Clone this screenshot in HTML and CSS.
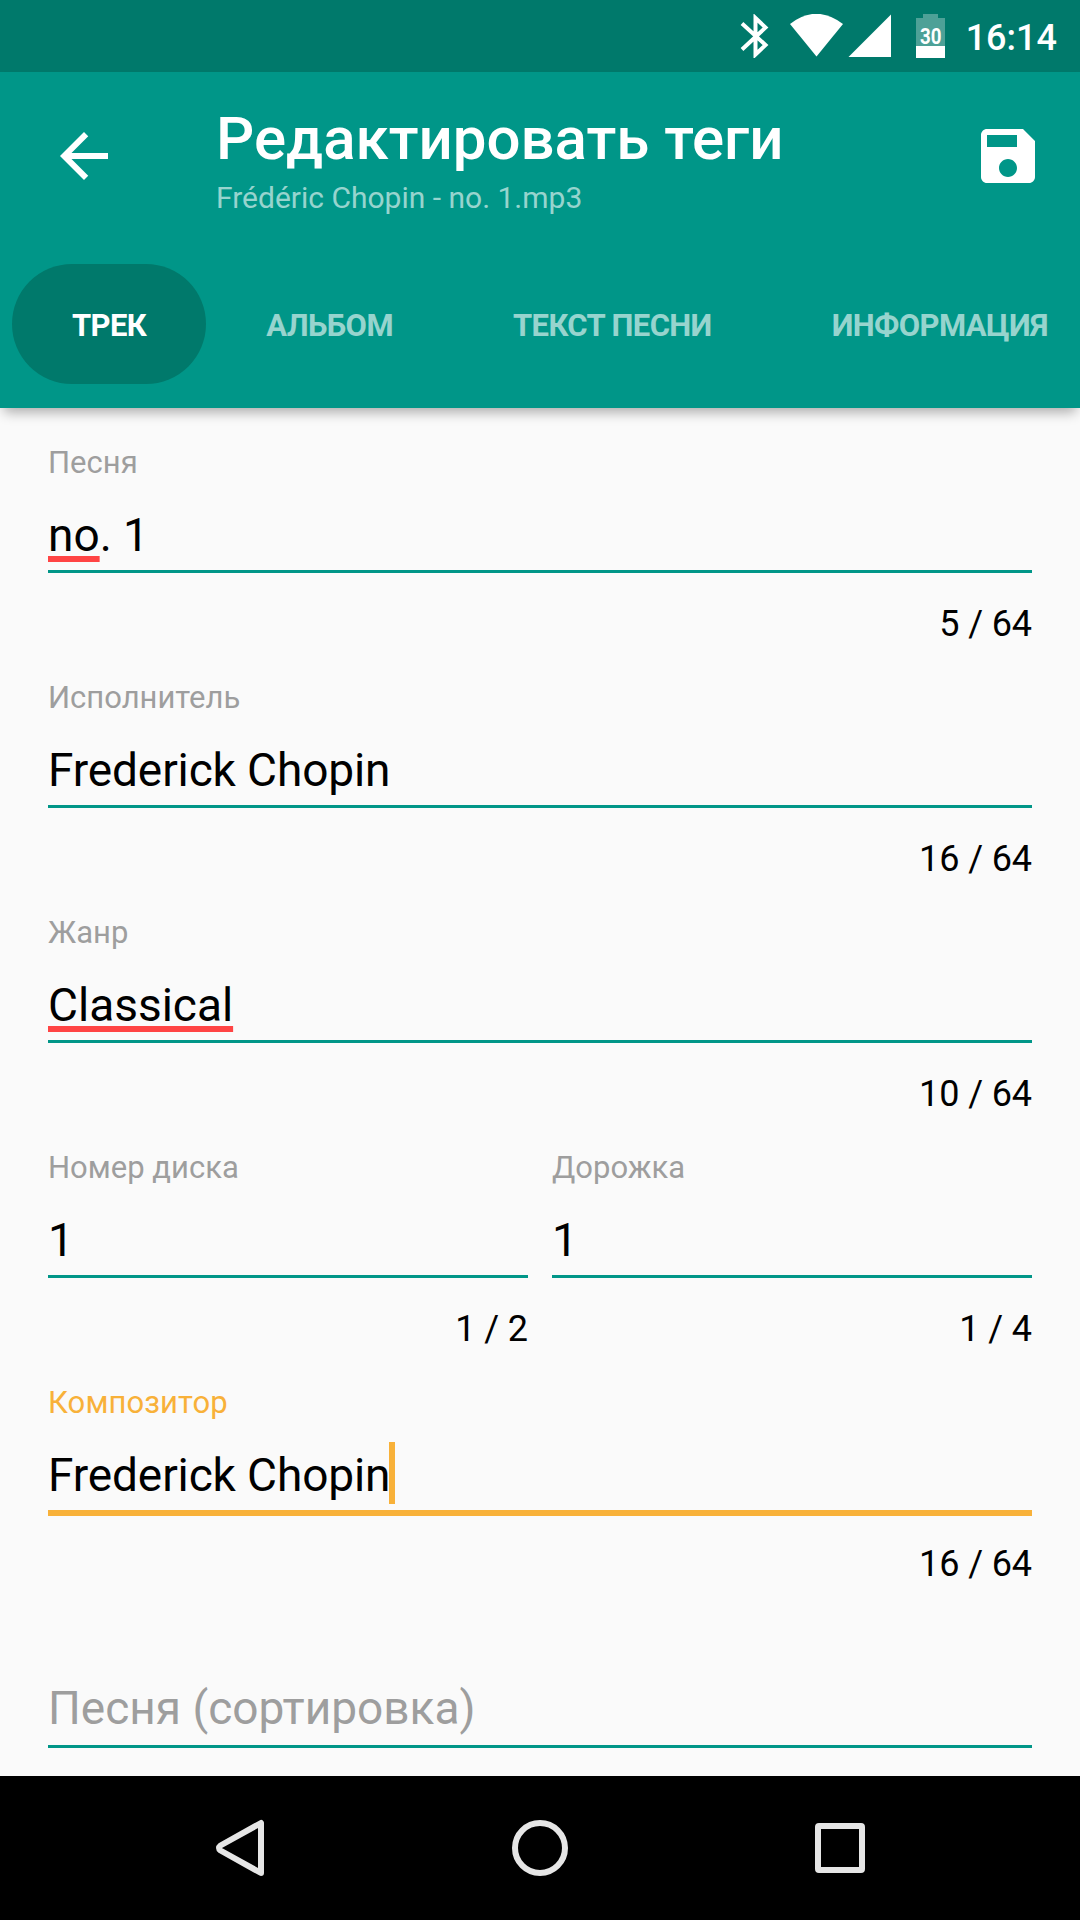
FILE: index.html
```html
<!DOCTYPE html>
<html lang="ru">
<head>
    <meta charset="UTF-8">
    <meta name="viewport" content="width=device-width, initial-scale=1.0">
    <title>Редактировать теги</title>
    <link rel="stylesheet" href="styles.css">
</head>
<body>
    <!-- Status bar -->
    <div class="status-bar">
        <svg class="status-icons" width="205" height="44" viewBox="0 0 205 44" fill="#fff">
            <path d="M2 9.500L25.500 31L15.500 40.500V4L25.500 13.500L2 35.500" fill="none" stroke="#fff" stroke-width="4"/>
            <path d="M50 10Q76 -10.500 103 10L76.500 42.500Z"/>
            <path d="M108.500 43H151V.5Z"/>
            <path d="M176 4h7V0h15v4h7v28h-29z" fill-opacity=".3"/>
            <path d="M176 32h29v12h-29z"/>
            <text x="180" y="30" class="battery-text" textLength="21.5" lengthAdjust="spacingAndGlyphs">30</text>
        </svg>
        <span class="clock">16:14</span>
    </div>

    <!-- App bar -->
    <header class="app-bar">
        <div class="toolbar">
            <svg class="icon" viewBox="0 0 24 24"><path d="M20 11H7.830l5.590-5.590L12 4l-8 8 8 8 1.410-1.410L7.830 13H20v-2z"/></svg>
            <div class="titles">
                <h1>Редактировать теги</h1>
                <p>Frédéric Chopin - no. 1.mp3</p>
            </div>
            <svg class="icon" viewBox="0 0 24 24"><path d="M17 3H5c-1.110 0-2 .9-2 2v14c0 1.100.890 2 2 2h14c1.100 0 2-.9 2-2V7l-4-4zm-5 16c-1.660 0-3-1.340-3-3s1.340-3 3-3 3 1.340 3 3-1.340 3-3 3zm3-10H5V5h10v4z"/></svg>
        </div>
        <nav class="tabs">
            <a class="tab active">ТРЕК</a>
            <a class="tab">АЛЬБОМ</a>
            <a class="tab">ТЕКСТ ПЕСНИ</a>
            <a class="tab">ИНФОРМАЦИЯ</a>
        </nav>
    </header>

    <!-- Tag fields -->
    <main class="content">
        <div class="field">
            <div class="label">Песня</div>
            <div class="value"><span class="spell">no</span>. 1</div>
            <div class="counter">5 / 64</div>
        </div>
        <div class="field">
            <div class="label">Исполнитель</div>
            <div class="value">Frederick Chopin</div>
            <div class="counter">16 / 64</div>
        </div>
        <div class="field">
            <div class="label">Жанр</div>
            <div class="value"><span class="spell">Classical</span></div>
            <div class="counter">10 / 64</div>
        </div>
        <div class="row">
            <div class="field">
                <div class="label">Номер диска</div>
                <div class="value">1</div>
                <div class="counter">1 / 2</div>
            </div>
            <div class="field">
                <div class="label">Дорожка</div>
                <div class="value">1</div>
                <div class="counter">1 / 4</div>
            </div>
        </div>
        <div class="field focused">
            <div class="label">Композитор</div>
            <div class="value"><span class="caret">Frederick Chopin</span></div>
            <div class="counter">16 / 64</div>
        </div>
        <div class="field empty">
            <div class="label"></div>
            <div class="value">Песня (сортировка)</div>
        </div>
    </main>

    <!-- Navigation bar -->
    <footer class="nav-bar">
        <svg width="60" height="60" viewBox="0 0 60 60"><path d="M51 5V55L10.500 32.500Q7.500 30 10.500 27.500Z"/></svg>
        <svg width="60" height="60" viewBox="0 0 60 60"><circle cx="30" cy="30" r="25"/></svg>
        <svg width="60" height="60" viewBox="0 0 60 60"><rect x="8" y="8" width="44" height="44" rx="1"/></svg>
    </footer>
</body>
</html>
```
FILE: styles.css
```css
* {
    box-sizing: border-box;
}
body {
    margin: 0;
    height: 1920px;
    display: flex;
    flex-direction: column;
    overflow: hidden;
    background: #fafafa;
    color: #000;
    font-family: Roboto, sans-serif;
}
.status-bar {
    height: 72px;
    flex-shrink: 0;
    display: flex;
    align-items: center;
    justify-content: flex-end;
    padding-right: 23px;
    background: #00796b;
    color: #fff;
}
.battery-text {
    font-size: 22.5px;
    font-weight: 700;
}
.clock {
    margin-left: 21px;
    font-size: 36px;
    font-weight: 500;
    line-height: 42px;
    padding-top: 3px;
}
.app-bar {
    height: 336px;
    flex-shrink: 0;
    background: #009688;
    color: #fff;
    box-shadow: 0 8px 12px -4px rgba(0, 0, 0, 0.33);
    position: relative;
}
.toolbar {
    height: 168px;
    display: flex;
    align-items: center;
    padding: 0 36px 0 48px;
}
.icon {
    width: 72px;
    height: 72px;
    fill: #fff;
}
.titles {
    flex: 1;
    padding: 8px 0 0 96px;
}
.titles h1 {
    margin: 0;
    font-size: 60px;
    font-weight: 500;
    line-height: 70px;
}
.titles p {
    margin: 0;
    font-size: 30px;
    line-height: 36px;
    padding-top: 6px;
    color: rgba(255, 255, 255, 0.6);
}
.tabs {
    display: flex;
    padding: 24px 0 24px 12px;
}
.tab {
    height: 120px;
    padding: 0 60px;
    border-radius: 60px;
    font-size: 31px;
    font-weight: 700;
    line-height: 124px;
    letter-spacing: -0.6px;
    white-space: nowrap;
    color: rgba(255, 255, 255, 0.6);
}
.tab.active {
    background: #00796b;
    color: #fff;
}
.content {
    flex: 1;
    min-height: 0;
    overflow: hidden;
    padding: 36px 48px 0;
}
.row {
    display: grid;
    grid-template-columns: 1fr 1fr;
    gap: 24px;
}
.field {
    height: 235px;
}
.label {
    height: 36px;
    margin-bottom: 24px;
    font-size: 31px;
    line-height: 38px;
    color: #9e9e9e;
}
.value {
    height: 69px;
    border-bottom: 3px solid #009688;
    font-size: 46px;
    line-height: 62px;
    letter-spacing: -0.12px;
}
.spell {
    letter-spacing: 0;
    text-decoration: underline 6px #ff4444;
    text-decoration-skip-ink: none;
    text-underline-offset: 5px;
}
.counter {
    margin-top: 30px;
    font-size: 36px;
    line-height: 42px;
    letter-spacing: -0.1px;
    text-align: right;
}
.focused .label {
    color: #f8b139;
    letter-spacing: 0.1px;
}
.focused .value {
    height: 72px;
    border-bottom: 6px solid #f8b139;
}
.focused .counter {
    margin-top: 27px;
}
.caret {
    position: relative;
}
.caret::after {
    content: "";
    position: absolute;
    left: 100%;
    top: -6px;
    width: 6px;
    height: 62px;
    margin-left: -1px;
    background: #f8b139;
}
.empty .value {
    line-height: 58px;
    letter-spacing: 0;
    color: #9e9e9e;
}
.nav-bar {
    height: 144px;
    flex-shrink: 0;
    display: flex;
    justify-content: center;
    align-items: center;
    gap: 240px;
    background: #000;
}
.nav-bar svg {
    fill: none;
    stroke: #e6e6e6;
    stroke-width: 6;
    stroke-linejoin: round;
}
```
